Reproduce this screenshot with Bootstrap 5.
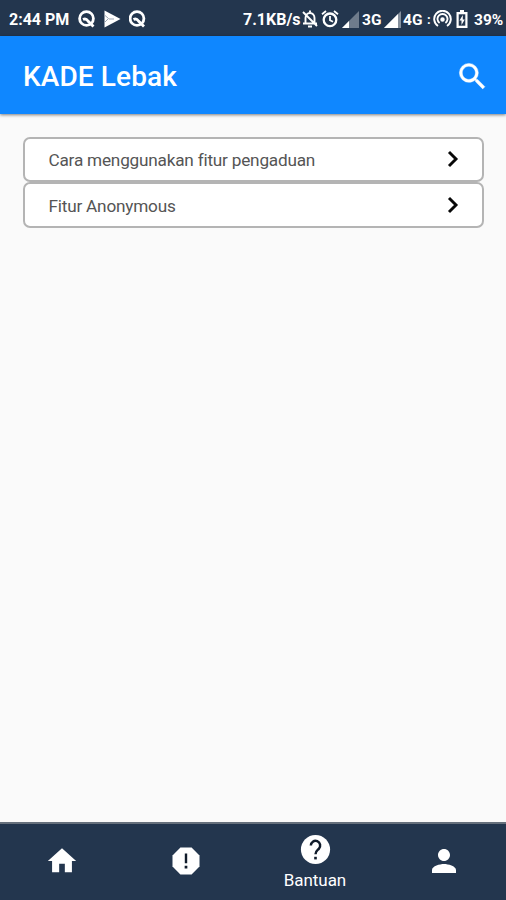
<!DOCTYPE html>
<html lang="id">
<head>
<meta charset="utf-8">
<meta name="viewport" content="width=device-width, initial-scale=1">
<title>KADE Lebak</title>
<link href="https://cdn.jsdelivr.net/npm/bootstrap@5.3.0/dist/css/bootstrap.min.css" rel="stylesheet">
<style>
body{font-family:Roboto,"Liberation Sans",sans-serif;background:#fafafa;height:900px;overflow:hidden}
svg{display:block;flex:none}
.status{height:36px;background:#23364e;color:#fff;font-weight:700;font-size:16px;line-height:20px;padding:2px 0 0 9px;white-space:nowrap}
.status>*{flex:none}
.status>span{padding-top:1px}
.w-time{width:69px}.w-rate{width:59px}.w-g3{width:22px;margin-left:3px}.w-g4{width:22px;margin-left:2px}
.w-dots{width:6px;font-size:13px;margin-left:2px}.w-pct{width:32px;margin-left:6px}
.w-g3,.w-g4,.w-pct{font-size:15.5px}
.gap-3px{margin-left:3px}.gap-4px{margin-left:4px}
.appbar{height:78px;background:#0f87ff;color:#fff;padding:2px 16px 0 23px;box-shadow:0 1px 3px rgba(0,0,0,.5)}
.title{font-size:28px;font-weight:500;line-height:36px;letter-spacing:.1px;padding-top:2px}
.faq{padding:23px 22px 0 23px}
.faq-item{height:45px;border:2px solid #b4b4b4;border-radius:7px;background:#fff;color:#555;font-size:17.2px;letter-spacing:-.21px;padding:0 17px 0 23.5px;text-decoration:none;line-height:24px}
.faq-item+.faq-item{height:46px;padding-top:1px}
.tabs{height:78px;background:#23364e;border-top:2px solid #66707c;display:grid;grid-template-columns:124px 124px 134px 124px}
.tab{color:#fff;text-decoration:none;font-size:17px;line-height:20px;padding-bottom:2px}
.tab-label{margin-top:3px;letter-spacing:-.05px}
</style>
<script src="https://cdn.jsdelivr.net/npm/bootstrap@5.3.0/dist/js/bootstrap.bundle.min.js"></script>
</head>
<body class="d-flex flex-column m-0">
<div class="status d-flex align-items-center">
  <span class="w-time">2:44 PM</span>
  <svg width="18" height="18" viewBox="0 0 18 18" fill="none" stroke="#fff"><circle cx="8.500" cy="8.500" r="6.900" stroke-width="2.800"/><path d="M5 9.500q3-1.500 5 1.500l5.500 5.500" stroke-width="2.800"/></svg>
  <svg class="ms-2" width="17" height="18" viewBox="0 0 17 18"><path d="M.5 .5 16.500 9 .5 17.500Z" fill="#fff"/><path d="m.5 5 4 3.500-4 4M5 9h5" stroke="#9ba5b2" fill="none"/></svg>
  <svg class="ms-2" width="18" height="18" viewBox="0 0 18 18" fill="none" stroke="#fff"><circle cx="8" cy="8.500" r="6.900" stroke-width="2.800"/><path d="M4.500 9.500q3-1.500 5 1.500l5.500 5.500" stroke-width="2.800"/></svg>
  <span class="w-rate ms-auto">7.1KB/s</span>
  <svg width="16" height="18" viewBox="0 0 16 18" fill="none" stroke="#fff" stroke-width="1.900"><path d="M3.500 13V8a4.500 5 0 0 1 9 0v5M1 13.500h14M1 2l14 14"/><path d="M8 .500v2M6 16.500h4"/></svg>
  <svg class="gap-3px" width="18" height="18" viewBox="0 0 18 18" fill="none" stroke="#fff" stroke-width="2.300"><circle cx="9" cy="9.800" r="6.300"/><path d="M9 6v4.200l3 1.600M1 4.300l4-3.300M17 4.300l-4-3.300" stroke-width="1.800"/></svg>
  <svg class="gap-3px" width="17" height="17" viewBox="0 0 17 17"><path d="M17 0v17H0Z" fill="#6f7c8c"/><path d="M7 10v7H0Z" fill="#fff"/></svg>
  <span class="w-g3">3G</span>
  <svg width="17" height="17" viewBox="0 0 17 17"><path d="M17 0v17H0Z" fill="#85909d"/><path d="M14 3v14H0Z" fill="#fff"/></svg>
  <span class="w-g4">4G</span>
  <span class="w-dots">:</span>
  <svg width="19" height="18" viewBox="0 0 19 18" fill="none" stroke="#fff" stroke-width="1.900"><path d="M5 16a8.300 8.300 0 1 1 9 0M6.600 13a5 5 0 1 1 5.800 0"/><circle cx="9.500" cy="9.500" r="1.300" fill="#fff"/></svg>
  <svg class="gap-4px" width="12" height="18" viewBox="0 0 12 18"><path d="M4 0h4v2h3.500v16H.500V2H4Z" fill="#fff"/><path d="M2.700 4.300h6.600v11.400H2.700Z" fill="#23364e"/><path d="M6.800 5 3.500 10.500h2V15l3.300-5.500h-2Z" fill="#fff"/></svg>
  <span class="w-pct">39%</span>
</div>
<header class="appbar d-flex align-items-center justify-content-between position-relative">
  <h1 class="title m-0">KADE Lebak</h1>
  <svg width="35" height="35" viewBox="0 0 24 24" fill="#fff" stroke="#fff" stroke-width=".3"><path d="M15.500 14h-.790l-.280-.270A6.471 6.471 0 0 0 16 9.500 6.500 6.500 0 1 0 9.500 16c1.610 0 3.090-.590 4.230-1.570l.270.280v.790l5 4.990L20.490 19l-4.990-5zm-6 0C7.010 14 5 11.990 5 9.500S7.010 5 9.500 5 14 7.010 14 9.500 11.990 14 9.500 14z"/></svg>
</header>
<main class="faq flex-grow-1">
  <a href="#" class="faq-item d-flex align-items-center justify-content-between"><span>Cara menggunakan fitur pengaduan</span>
    <svg width="24" height="24" viewBox="0 0 24 24" fill="none" stroke="#080808" stroke-width="2.900"><path d="m8 4 7 7-7 7"/></svg></a>
  <a href="#" class="faq-item d-flex align-items-center justify-content-between"><span>Fitur Anonymous</span>
    <svg width="24" height="24" viewBox="0 0 24 24" fill="none" stroke="#080808" stroke-width="2.900"><path d="m8 4 7 7-7 7"/></svg></a>
</main>
<nav class="tabs">
  <a href="#" class="tab d-flex align-items-center justify-content-center" aria-label="Beranda"><svg width="34" height="34" viewBox="0 0 24 24" fill="#fff"><path d="M10 20v-6h4v6h5v-8h3L12 3 2 12h3v8z"/></svg></a>
  <a href="#" class="tab d-flex align-items-center justify-content-center" aria-label="Pengaduan"><svg width="36" height="36" viewBox="0 0 24 24"><path d="M15.730 3H8.270L3 8.270v7.460L8.270 21h7.460L21 15.730V8.270z" fill="#fff"/><path d="M11.200 7h1.600v6.500h-1.600zM11.100 15.200h1.800V17h-1.800z" fill="#111c2b"/></svg></a>
  <a href="#" class="tab d-flex flex-column align-items-center pt-2"><svg width="35" height="35" viewBox="0 0 24 24"><circle cx="12" cy="12" r="10" fill="#fff"/><path d="M8.800 9.300a3.200 3.200 0 1 1 5.500 2.200C13 12.800 12 13.300 12 15.300" fill="none" stroke="#111c2b" stroke-width="1.700"/><path d="M11.100 17h1.800v1.800h-1.800z" fill="#111c2b"/></svg><span class="tab-label">Bantuan</span></a>
  <a href="#" class="tab d-flex align-items-center justify-content-center" aria-label="Profil"><svg width="36" height="36" viewBox="0 0 24 24" fill="#fff"><path d="M12 12c2.210 0 4-1.790 4-4s-1.790-4-4-4-4 1.790-4 4 1.790 4 4 4zm0 2c-2.670 0-8 1.340-8 4v2h16v-2c0-2.660-5.330-4-8-4z"/></svg></a>
</nav>
</body>
</html>
